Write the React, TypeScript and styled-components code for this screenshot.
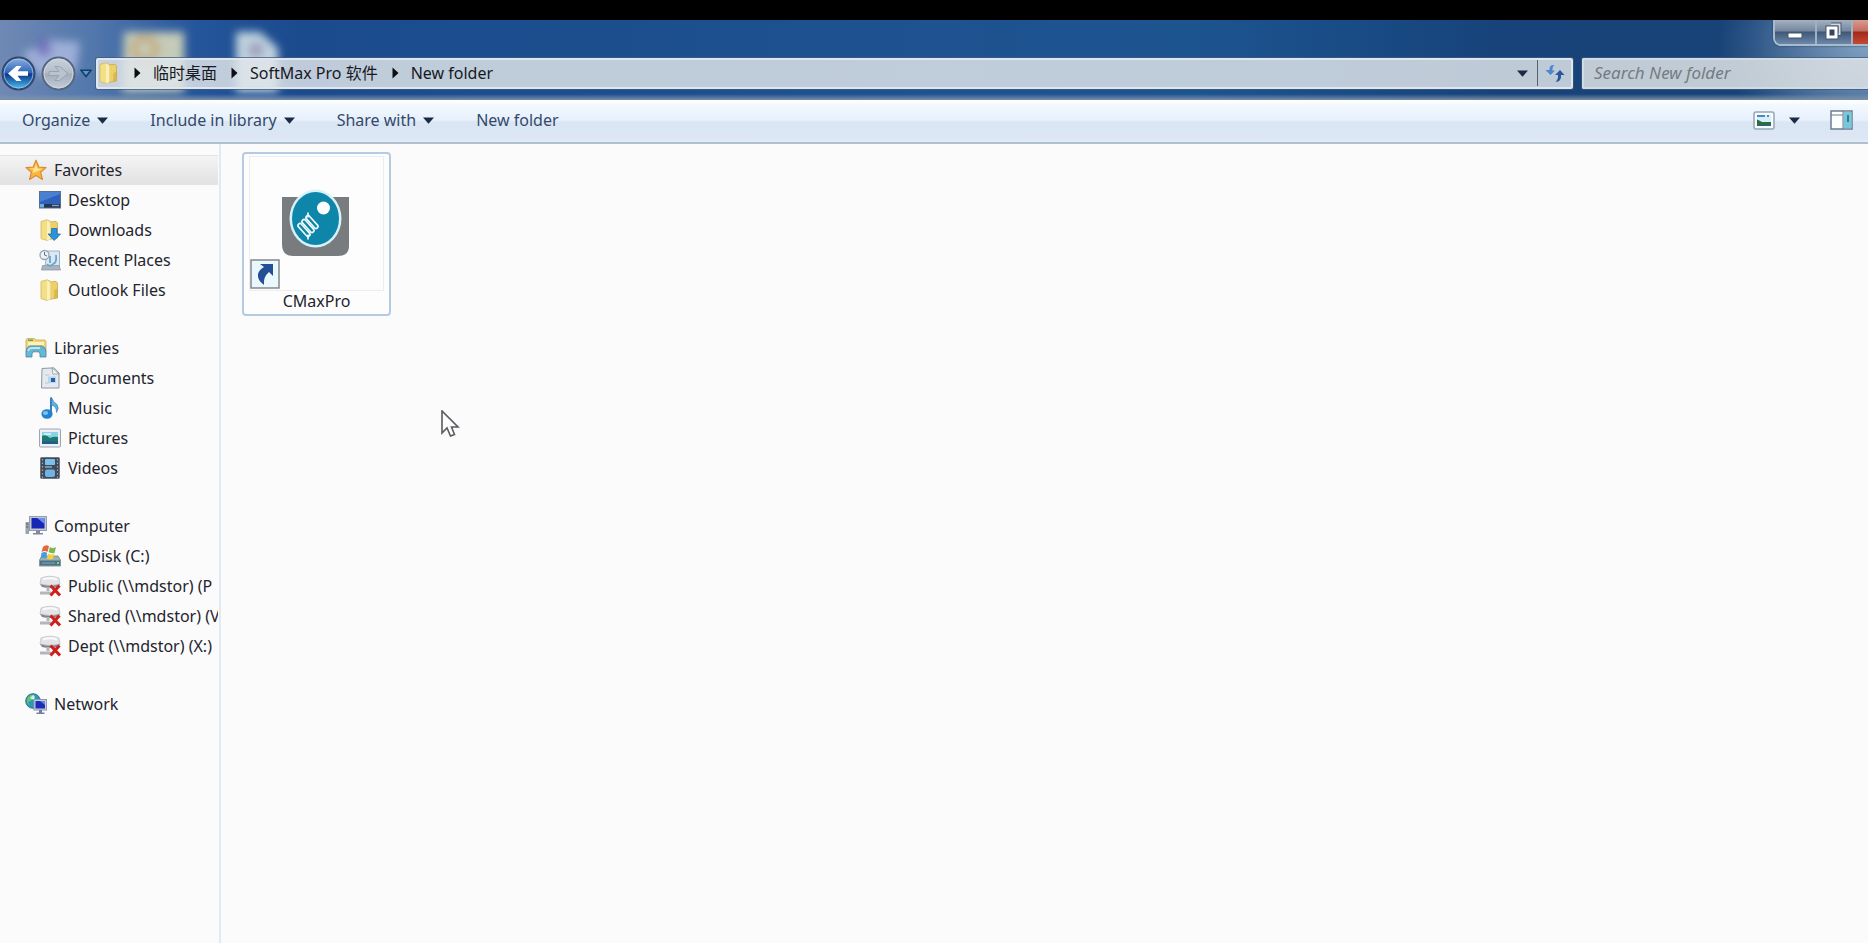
import React from "react";
import styled, { createGlobalStyle } from "styled-components";

const GlobalStyle = createGlobalStyle`
  *, *::before, *::after { box-sizing: border-box; }
  body {
    margin: 0;
    background: #fbfbfc;
    color: #24242c;
    font-family: "Noto Sans", "Noto Sans CJK SC", sans-serif;
    font-size: 16px;
    line-height: 20px;
  }
  button, input { font: inherit; color: inherit; }
  svg { display: block; flex: none; }
`;

const Window = styled.div`
  display: flex;
  flex-direction: column;
  min-height: 100vh;
  border-top: 20px solid #000;
  overflow: hidden;
`;

const Glass = styled.header`
  position: relative;
  display: flex;
  flex-direction: column;
  height: 80px;
  background:
    linear-gradient(180deg, transparent 74px, rgba(130, 150, 175, 0.6) 78px, #7c8ca2 80px),
    radial-gradient(ellipse 150px 100px at 100% 30%, rgba(165, 190, 215, 0.7), transparent),
    linear-gradient(90deg, #7089b4 0, #5378ac 90px, #24549a 200px, #1b4b8d 300px, #1e5290 50%, #1c5490 64%, #17437a 80%, #184378 94%, #315c8d 100%);
`;

const GlassReflections = styled.svg`
  position: absolute;
  left: 0;
  top: 0;
`;

const Captions = styled.div`
  position: absolute;
  right: 0;
  top: 0;
  display: flex;
  height: 26px;
  border: 2px solid #a9bacd;
  border-width: 0 0 2px 2px;
  border-radius: 0 0 0 8px;
  overflow: hidden;
  box-shadow: 0 0 2px #24384f;
`;

const CaptionButton = styled.button<{ $kind: "minimize" | "restore" | "close" }>`
  display: flex;
  align-items: center;
  justify-content: center;
  width: ${(p) => ({ minimize: 40, restore: 36, close: 17 })[p.$kind]}px;
  padding: 0;
  border: 0;
  border-left: ${(p) => (p.$kind === "minimize" ? "0" : "2px solid #9fb1c5")};
  background: ${(p) =>
    p.$kind === "close"
      ? "linear-gradient(180deg, #d99b90 0, #c46d60 11px, #a32819 12px, #c44a35 24px)"
      : "linear-gradient(180deg, #a3b1c2 0, #75879f 11px, #3f5878 12px, #6d87a8 24px)"};
`;

const NavRow = styled.div`
  position: relative;
  display: flex;
  align-items: center;
  height: 35px;
  margin-top: 36px;
`;

const RoundButton = styled.button`
  padding: 0;
  margin-left: 1px;
  margin-right: 4px;
  border: 0;
  background: none;
`;

const RecentButton = styled.button`
  display: flex;
  width: 16px;
  padding: 0;
  border: 0;
  background: none;
`;

const AddressBar = styled.div`
  display: flex;
  flex: 1;
  align-items: center;
  height: 31px;
  border: 2px solid #dde7f2;
  border-radius: 2px;
  background: rgba(225, 230, 233, 0.83);
  box-shadow: 0 0 0 1px rgba(70, 90, 118, 0.75);
  margin-right: 9px;
  padding-bottom: 1px;
`;

const Crumbs = styled.ol`
  display: flex;
  flex: 1;
  align-items: center;
  margin: 0;
  padding: 0;
  list-style: none;
`;

const Crumb = styled.li`
  display: flex;
  align-items: center;
  gap: 12px;
  margin-left: 14px;
`;

const CrumbLink = styled.a`
  color: #17191f;
  text-decoration: none;
  white-space: nowrap;
`;

const AddressButton = styled.button<{ $divided?: boolean }>`
  display: flex;
  align-items: center;
  justify-content: center;
  align-self: stretch;
  width: ${(p) => (p.$divided ? 34 : 30)}px;
  padding: 0;
  border: 0;
  border-left: ${(p) => (p.$divided ? "1px solid #536171" : "0")};
  background: none;
`;

const Search = styled.input`
  width: 286px;
  height: 31px;
  padding: 0 10px 2px;
  border: 2px solid #cfdbe7;
  border-right: 0;
  border-radius: 2px 0 0 2px;
  background: rgba(222, 227, 229, 0.85);
  box-shadow: 0 0 0 1px rgba(70, 90, 118, 0.75);
  font-style: italic;
  font-size: 17px;
  &::placeholder { color: #747b82; opacity: 1; }
`;

const CommandBar = styled.div`
  display: flex;
  align-items: center;
  height: 44px;
  padding: 0 15px 2px 22px;
  border-bottom: 2px solid #b0c0d0;
  background: linear-gradient(180deg, #ffffff 0, #f1f8fe 6px, #e7f1fc 20px, #dae6f4 22px, #dce6f4 38px, #e4edf7 42px);
`;

const Command = styled.button`
  display: flex;
  align-items: center;
  gap: 7px;
  margin-right: 42px;
  padding: 0;
  border: 0;
  background: none;
  color: #34496a;
  white-space: nowrap;
`;

const Views = styled.div`
  display: flex;
  align-items: center;
  gap: 14px;
  margin-left: auto;
`;

const IconButton = styled.button<{ $apart?: boolean }>`
  display: flex;
  padding: 0;
  border: 0;
  margin-left: ${(p) => (p.$apart ? 16 : 0)}px;
  background: none;
`;

const Body = styled.div`
  display: flex;
  flex: 1;
`;

const Sidebar = styled.nav`
  display: flex;
  flex: none;
  flex-direction: column;
  gap: 28px;
  width: 221px;
  padding: 11px 1px 0 0;
  border-right: 2px solid #e3e9f3;
`;

const Group = styled.section`
  display: flex;
  flex-direction: column;
`;

const Place = styled.a<{ $level: 1 | 2; $active?: boolean }>`
  display: flex;
  align-items: center;
  gap: 7px;
  height: 30px;
  padding-left: ${(p) => (p.$level === 1 ? 25 : 39)}px;
  overflow: hidden;
  border: solid ${(p) => (p.$active ? "#e3e3e4" : "transparent")};
  border-width: 1px 0;
  background: ${(p) => (p.$active ? "linear-gradient(180deg, #f4f4f5, #e2e2e3)" : "none")};
  color: inherit;
  text-decoration: none;
  white-space: nowrap;
`;

const Files = styled.main`
  position: relative;
  flex: 1;
  padding: 8px 21px;
`;

const FileTile = styled.button`
  display: flex;
  flex-direction: column;
  align-items: center;
  width: 149px;
  height: 164px;
  padding: 2px 5px 0;
  border: 2px solid #b5cbe2;
  border-radius: 4px;
  background: #fdfdfe;
`;

const Thumb = styled.span`
  display: flex;
  width: 135px;
  height: 135px;
  border: 1px solid #ededef;
`;

const Pointer = styled.svg`
  position: absolute;
  left: 220px;
  top: 266px;
`;

function Caret() {
  return (
    <svg width="11" height="7" viewBox="0 0 11 7">
      <path d="M0 0.5H11L5.5 6.8Z" fill="#1b2a45" />
    </svg>
  );
}

function CrumbArrow() {
  return (
    <svg width="7" height="12" viewBox="0 0 7 12">
      <path d="M0.5 0.5V11.5L6.5 6Z" fill="#0c0d12" />
    </svg>
  );
}

function Icon({ children }: { children: React.ReactNode }) {
  return (
    <svg width="22" height="22" viewBox="0 0 22 22" aria-hidden="true">
      {children}
    </svg>
  );
}

const folderShape = (
  <>
    <path d="M2 2.5L8 0.8L11 2V20L8 21.5L2 19.5Z" fill="#f3df86" stroke="#d3b659" strokeWidth="0.8" />
    <path d="M11 3L17 2.3L18.5 4V19L11 20.3Z" fill="#ecd16a" stroke="#c9a94b" strokeWidth="0.8" />
    <path d="M8 1.5L11.5 3.5V20L8 21.5Z" fill="#faf0b4" />
    <path d="M15.5 11L18.5 9.5V19L15 19.6Z" fill="#cda83e" opacity="0.6" />
  </>
);

const driveOffline = (
  <>
    <path d="M2 3Q11 -0.5 20 3L21 9Q11 12 1 9Z" fill="#e3e4e6" stroke="#c3c4c8" strokeWidth="0.8" />
    <path d="M4 4.5Q11 2 18 4.5" stroke="#fafafa" strokeWidth="2" fill="none" />
    <path d="M1 9Q11 12.5 21 9L19 12Q11 14 3 12Z" fill="#85868b" />
    <path d="M9 12V16M1 18H12" stroke="#b4b5b8" strokeWidth="3" />
    <path d="M11.5 10.5L21 20.5M20.5 10.5L11.5 20.5" stroke="#cf1f1c" strokeWidth="3" />
  </>
);

const icons: Record<string, React.ReactNode> = {
  star: (
    <>
      <path d="M11 1.2L13.8 8L21 8.6L15.6 13.2L17.4 20.4L11 16.5L4.6 20.4L6.4 13.2L1 8.6L8.2 8Z" fill="#fbb53c" stroke="#d98a35" strokeWidth="1.2" strokeLinejoin="round" />
      <path d="M11 4.5L12.6 9.4L17.5 10L12 12.5L7.5 14L8.5 11L5 9.6L9.5 9.2Z" fill="#ffe38a" />
    </>
  ),
  desktop: (
    <>
      <rect x="0.5" y="2.5" width="21" height="16.5" fill="#2d62bb" stroke="#5a6e8d" />
      <path d="M1 3H21V5L1 13Z" fill="#5b94e0" opacity="0.6" />
      <rect x="1" y="15" width="20" height="3.5" fill="#27364f" />
      <rect x="1" y="15" width="4" height="3.5" fill="#68b2dc" />
      <rect x="13" y="15.8" width="7" height="1.4" fill="#8fa1bd" />
    </>
  ),
  downloads: (
    <>
      {folderShape}
      <path d="M12.5 9.5H18V15H21.5L15.2 21.5L9 15H12.5Z" fill="#2a93dd" stroke="#1f6fb5" strokeWidth="0.8" />
    </>
  ),
  recent: (
    <>
      <path d="M8 2H20.5V18H6Z" fill="#dbe8f1" stroke="#9db4c4" />
      <path d="M3.5 16.5H20L21.5 21H2.5Z" fill="#a9b4be" stroke="#8793a0" strokeWidth="0.7" />
      <path d="M11 14V7M14 15Q18 14 17 6M8 15Q11 19 15 14" stroke="#6da3cb" strokeWidth="1.8" fill="none" />
      <circle cx="5.5" cy="6" r="4.5" fill="#edf2f5" stroke="#94a6b4" strokeWidth="1.3" />
      <path d="M5.5 3V6L8 7" stroke="#597386" fill="none" />
    </>
  ),
  folder: folderShape,
  libraries: (
    <>
      <path d="M1 3L2 1.5H9L11 3H20L21 5V15H1Z" fill="#efd57b" stroke="#c6ab5b" strokeWidth="0.8" />
      <path d="M3 5H19V8H3Z" fill="#fbf1b9" />
      <path d="M3 3.2H8" stroke="#68a653" strokeWidth="1.5" />
      <path d="M1 20V15Q1 10 5 9H17Q21 10 21 15V20H15V17Q15 14 11 14Q7 14 7 17V20Z" fill="#66b8d6" stroke="#4389ab" strokeWidth="0.8" />
      <path d="M3 14Q4 11 7 11H15" stroke="#b8e6ef" strokeWidth="1.8" fill="none" />
    </>
  ),
  documents: (
    <>
      <path d="M3 1.5L15 0.8L20 6V21H2.5Z" fill="#e4e8ef" stroke="#8e959f" />
      <path d="M13 1L20 7H14Z" fill="#f9fafb" stroke="#8e959f" strokeWidth="0.8" />
      <path d="M6 8H10M6 16H10" stroke="#bdc7d5" />
      <rect x="9" y="9.5" width="8" height="6.5" fill="#b5d6ef" />
      <rect x="12" y="11" width="4" height="4" fill="#2a5c9e" />
    </>
  ),
  music: (
    <>
      <path d="M12 0.5V17" stroke="#3381be" strokeWidth="2" />
      <path d="M12.5 0.5Q14 5 18 7.5Q20.5 11 17.5 15.5Q18 9.5 12.5 8Z" fill="#66aede" stroke="#367db8" strokeWidth="0.7" />
      <ellipse cx="8" cy="17" rx="5.6" ry="4.8" fill="#2382ce" />
      <ellipse cx="6.5" cy="16" rx="2.6" ry="2" fill="#79c4ef" />
    </>
  ),
  pictures: (
    <>
      <rect x="0.5" y="2" width="21" height="18" rx="1" fill="#ecf0f4" stroke="#9ca5b0" />
      <rect x="3" y="5" width="16" height="12" fill="#89d3e6" />
      <path d="M3 9Q7 7 11 11Q15 9 19 10V17H3Z" fill="#20796f" />
      <path d="M3 14.5H19V17H3Z" fill="#205a8e" />
      <path d="M5 7H12" stroke="#e0f5f7" strokeWidth="1.6" />
    </>
  ),
  videos: (
    <>
      <rect x="1.5" y="0.5" width="19" height="21" rx="1" fill="#414b58" stroke="#6e7782" />
      <rect x="6" y="2" width="10" height="6" rx="1" fill="#7cc0ed" />
      <rect x="6" y="12.5" width="10" height="7.5" rx="2" fill="#73b2e4" />
      <path d="M6 10H13" stroke="#8db4d2" strokeWidth="1.4" />
      <path d="M3.5 2V21M18.5 2V21" stroke="#9ba2ab" strokeWidth="1.2" strokeDasharray="1.5 2" />
    </>
  ),
  computer: (
    <>
      <path d="M0.5 7H4V19H0.5Z" fill="#9da3ad" />
      <path d="M1 9H3.5M1 12H3.5" stroke="#555f70" />
      <rect x="4.5" y="1.5" width="17" height="14" fill="#c3c7d4" stroke="#979dad" />
      <rect x="6.5" y="3" width="13" height="10.5" fill="#1626b5" />
      <path d="M12 3H19.5V9Z" fill="#6d8df0" />
      <path d="M11 15.5H15V18H18V19.5H8V18H11Z" fill="#818899" />
    </>
  ),
  osdisk: (
    <>
      <path d="M3 11H19L21.5 15V21H0.5V15Z" fill="#9eb0ae" stroke="#71858a" strokeWidth="0.8" />
      <rect x="1" y="15.5" width="20" height="5" fill="#4d7286" />
      <path d="M3 18H16" stroke="#7fa9ba" />
      <path d="M18 18H20" stroke="#78df78" strokeWidth="2" />
      <path d="M4 2Q7 -1 10 1.5L8.5 7Q6 5 2.5 7Z" fill="#e36738" />
      <path d="M11 2Q13.5 4 17 2L15.5 8Q13 9 9.5 7Z" fill="#79b94b" />
      <path d="M2.5 8Q5.5 6 8.2 8L7 13.5Q4 12 1.5 13.5Z" fill="#4a9bd9" />
      <path d="M9.2 8.5Q12 10 15.2 9L14 14Q11 15 8 13.5Z" fill="#f3cf44" />
    </>
  ),
  offline: driveOffline,
  network: (
    <>
      <circle cx="8" cy="8" r="7.3" fill="#2d97ba" stroke="#32768e" />
      <path d="M3 4Q7 0 10 3L7 7L3 9L5 13Q0 10 3 4Z" fill="#6fc06c" />
      <path d="M8 2Q11 4 9 7L5 5Z" fill="#cdf1ee" />
      <rect x="9" y="6.5" width="12.5" height="10.5" fill="#c9cfdd" stroke="#8f98ae" />
      <rect x="10.5" y="8" width="9.5" height="7.5" fill="#1a2cb8" />
      <path d="M15 8H20V12Z" fill="#6580e4" />
      <path d="M14 17H17V19.5H19.5V21H11.5V19.5H14Z" fill="#72809e" />
    </>
  ),
};

type Entry = { label: string; icon: string };

const groups: { head: Entry; items: Entry[] }[] = [
  {
    head: { label: "Favorites", icon: "star" },
    items: [
      { label: "Desktop", icon: "desktop" },
      { label: "Downloads", icon: "downloads" },
      { label: "Recent Places", icon: "recent" },
      { label: "Outlook Files", icon: "folder" },
    ],
  },
  {
    head: { label: "Libraries", icon: "libraries" },
    items: [
      { label: "Documents", icon: "documents" },
      { label: "Music", icon: "music" },
      { label: "Pictures", icon: "pictures" },
      { label: "Videos", icon: "videos" },
    ],
  },
  {
    head: { label: "Computer", icon: "computer" },
    items: [
      { label: "OSDisk (C:)", icon: "osdisk" },
      { label: "Public (\\\\mdstor) (P", icon: "offline" },
      { label: "Shared (\\\\mdstor) (V", icon: "offline" },
      { label: "Dept (\\\\mdstor) (X:)", icon: "offline" },
    ],
  },
  { head: { label: "Network", icon: "network" }, items: [] },
];

function RoundArrow({ forward }: { forward?: boolean }) {
  const id = forward ? "forwardFill" : "backFill";
  return (
    <svg width="35" height="35" viewBox="0 0 35 35">
      <defs>
        <linearGradient id={id} x1="0" y1="0" x2="0" y2="1">
          <stop offset="0" stopColor={forward ? "#c9d3e0" : "#8fb3e2"} />
          <stop offset="0.48" stopColor={forward ? "#b3bcc9" : "#2b64b8"} />
          <stop offset="0.52" stopColor={forward ? "#a3adbb" : "#0a3588"} />
          <stop offset="1" stopColor={forward ? "#c5ced9" : "#4fc6f5"} />
        </linearGradient>
      </defs>
      <circle cx="17.5" cy="17.5" r="16" fill={`url(#${id})`} stroke={forward ? "#56677f" : "#32486e"} strokeWidth="2" />
      <circle cx="17.5" cy="17.5" r="14.5" fill="none" stroke={forward ? "#d5dde7" : "#a5c3e8"} strokeWidth="1" opacity="0.8" />
      {forward ? (
        <path d="M8 15.5H18L14 10.5H18.5L27 17.5L18.5 24.5H14L18 19.5H8Z" fill="#b9c3d0" stroke="#98a3b2" strokeWidth="1" />
      ) : (
        <path d="M27 15.3H16.5L20.5 10H15.5L7 17.5L15.5 25H20.5L16.5 19.7H27Z" fill="#fff" />
      )}
    </svg>
  );
}

export default function App() {
  return (
    <Window>
      <GlobalStyle />
      <Glass>
        <GlassReflections width="300" height="80" aria-hidden="true">
          <defs>
            <filter id="frost" x="-30%" y="-30%" width="160%" height="160%">
              <feGaussianBlur stdDeviation="4" />
            </filter>
          </defs>
          <g filter="url(#frost)">
            <path d="M22 34L50 20L80 22L76 52L40 56Z" fill="#aebbe2" opacity="0.8" />
            <ellipse cx="44" cy="28" rx="8" ry="9" fill="#6556b4" opacity="0.6" />
            <path d="M124 12H184V72H122Z" fill="#c5cbb8" />
            <circle cx="145" cy="29" r="11" fill="none" stroke="#c49c62" strokeWidth="6" opacity="0.8" />
            <path d="M236 12H260L278 28V72H236Z" fill="#bfd2de" />
            <circle cx="256" cy="30" r="8" fill="#9896b6" opacity="0.8" />
          </g>
        </GlassReflections>
        <NavRow>
          <RoundButton aria-label="Back"><RoundArrow /></RoundButton>
          <RoundButton aria-label="Forward"><RoundArrow forward /></RoundButton>
          <RecentButton aria-label="Recent pages">
            <svg width="12" height="9" viewBox="0 0 12 9">
              <path d="M1 1.2H11L6 7.5Z" fill="#4f9bc9" stroke="#133c69" strokeWidth="1.5" />
            </svg>
          </RecentButton>
          <AddressBar>
            <svg width="22" height="22" viewBox="0 0 22 22">{folderShape}</svg>
            <Crumbs>
              {["临时桌面", "SoftMax Pro 软件", "New folder"].map((name) => (
                <Crumb key={name}>
                  <CrumbArrow />
                  <CrumbLink href="#">{name}</CrumbLink>
                </Crumb>
              ))}
            </Crumbs>
            <AddressButton aria-label="Previous locations"><Caret /></AddressButton>
            <AddressButton $divided aria-label="Refresh">
              <svg width="20" height="20" viewBox="0 0 20 20">
                <path d="M9.500 2Q4.500 1.500 4.500 6V7H0.500L5.500 12L10 7.500H7.500Q7 4 9.500 2Z" fill="#4f86cb" />
                <path d="M10.500 19Q16.500 18.500 16 13V12H19.500L15 7L10 12H13Q13.500 16 10.500 19Z" fill="#2b559f" />
              </svg>
            </AddressButton>
          </AddressBar>
          <Search type="search" aria-label="Search New folder" placeholder="Search New folder" />
        </NavRow>
        <Captions>
          <CaptionButton $kind="minimize" aria-label="Minimize">
            <svg width="16" height="20" viewBox="0 0 16 20">
              <rect x="1" y="11" width="14" height="5" rx="1" fill="#fff" stroke="#46566b" />
            </svg>
          </CaptionButton>
          <CaptionButton $kind="restore" aria-label="Restore">
            <svg width="18" height="20" viewBox="0 0 18 20">
              <path d="M6 2.500H14.500V12H12" fill="none" stroke="#46566b" strokeWidth="4" />
              <path d="M6 2.500H14.500V12H12" fill="none" stroke="#d3dae3" strokeWidth="2" />
              <rect x="3" y="6" width="8" height="9" fill="#35475f" stroke="#46566b" strokeWidth="5" />
              <rect x="3" y="6" width="8" height="9" fill="#35475f" stroke="#fff" strokeWidth="3" />
            </svg>
          </CaptionButton>
          <CaptionButton $kind="close" aria-label="Close" />
        </Captions>
      </Glass>
      <CommandBar>
        <Command>Organize <Caret /></Command>
        <Command>Include in library <Caret /></Command>
        <Command>Share with <Caret /></Command>
        <Command>New folder</Command>
        <Views>
          <IconButton aria-label="Change your view">
            <svg width="22" height="19" viewBox="0 0 22 19">
              <rect x="1" y="1" width="20" height="17" rx="2" fill="#f7f9fb" stroke="#98a5b6" strokeWidth="1.500" />
              <rect x="4" y="4" width="14" height="11" fill="#d5effb" />
              <path d="M4 5H12M14 5H16" stroke="#4c86c6" strokeWidth="2" />
              <path d="M4 8.500Q6 9 9 11H18V14H4Z" fill="#27703d" />
              <path d="M4 14.500H18" stroke="#2f5e9c" />
            </svg>
          </IconButton>
          <IconButton aria-label="More view options"><Caret /></IconButton>
          <IconButton $apart aria-label="Show the preview pane">
            <svg width="23" height="20" viewBox="0 0 23 20">
              <rect x="1" y="1" width="21" height="18" fill="#fdfefe" stroke="#6b7d92" strokeWidth="1.500" />
              <path d="M1 5H13" stroke="#6b7d92" />
              <rect x="13.500" y="2" width="8" height="16" fill="#79c5da" />
              <path d="M13 1V19" stroke="#6b7d92" />
              <path d="M18 5V12" stroke="#2d7d9b" strokeWidth="2" />
            </svg>
          </IconButton>
        </Views>
      </CommandBar>
      <Body>
        <Sidebar aria-label="Places">
          {groups.map(({ head, items }, i) => (
            <Group key={head.label}>
              <Place href="#" $level={1} $active={i === 0}>
                <Icon>{icons[head.icon]}</Icon>
                {head.label}
              </Place>
              {items.map((item) => (
                <Place href="#" $level={2} key={item.label}>
                  <Icon>{icons[item.icon]}</Icon>
                  {item.label}
                </Place>
              ))}
            </Group>
          ))}
        </Sidebar>
        <Files>
          <FileTile>
            <Thumb>
              <svg width="133" height="133" viewBox="0 0 133 133" aria-hidden="true">
                <path d="M32 40H99V89Q99 99 88 99H43Q32 99 32 87Z" fill="#797c7f" />
                <ellipse cx="65.500" cy="61.500" rx="26" ry="29" fill="#d8f2fa" />
                <ellipse cx="65.500" cy="61.500" rx="23.500" ry="26.500" fill="#0d86aa" />
                <circle cx="73.500" cy="51" r="6.500" fill="#fff" />
                <g fill="none" stroke="#f4fcfe" strokeWidth="1.600" strokeLinecap="round">
                  <rect x="-8" y="-2" width="16" height="4" rx="2" transform="translate(62 65) rotate(48)" />
                  <rect x="-8" y="-2" width="16" height="4" rx="2" transform="translate(58 69) rotate(48)" />
                  <rect x="-8" y="-2" width="16" height="4" rx="2" transform="translate(54 73) rotate(48)" />
                  <path d="M58 56V60M58 78V82" />
                </g>
                <rect x="1" y="103" width="28" height="28" fill="#eaf8fd" stroke="#83878c" strokeWidth="1.500" />
                <path d="M10 107H23V119L19 115Q13 120 14 128Q7 123 8 117Q9 113 14 110Z" fill="#234f95" />
              </svg>
            </Thumb>
            <span>CMaxPro</span>
          </FileTile>
          <Pointer width="20" height="28" viewBox="0 0 20 28" aria-hidden="true">
            <path d="M1 1V23L6 18L9.500 26L13.500 24.500L10.500 17H17Z" fill="#fdfdfd" stroke="#5a5a60" strokeWidth="1.600" />
          </Pointer>
        </Files>
      </Body>
    </Window>
  );
}
